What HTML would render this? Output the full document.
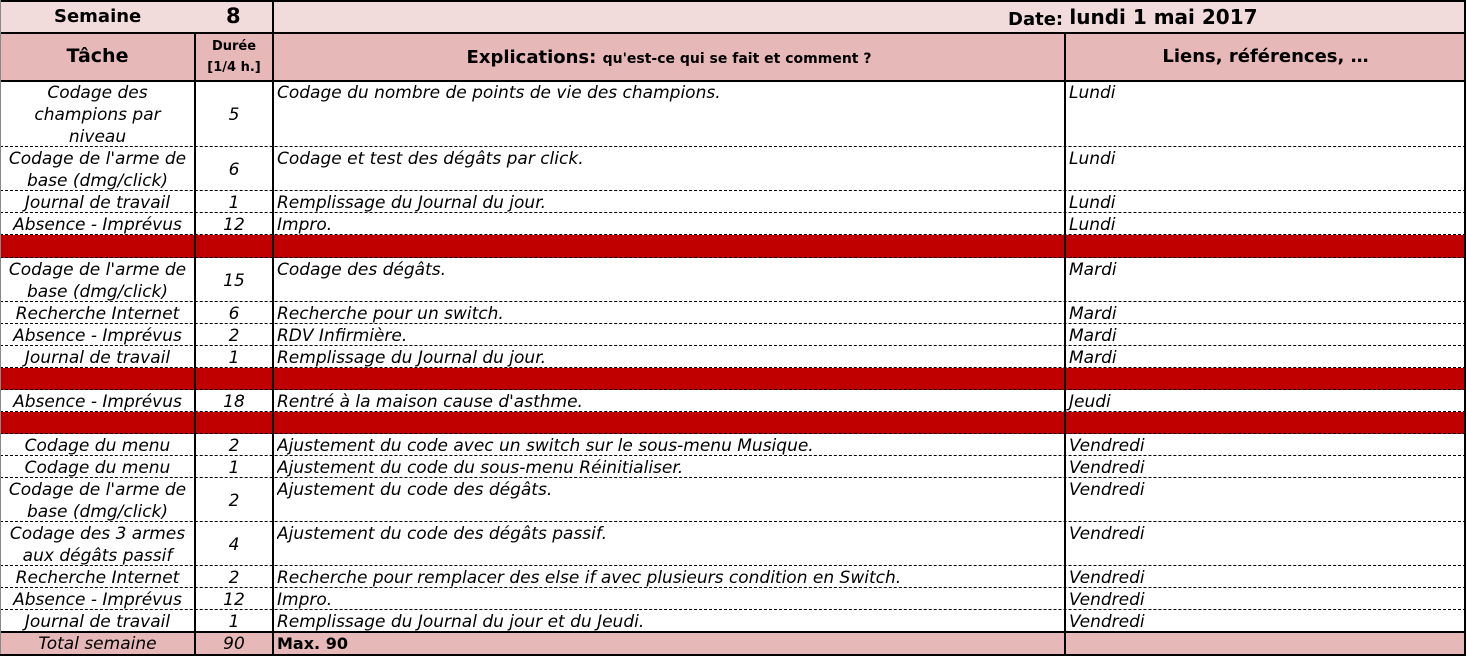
<!DOCTYPE html>
<html><head><meta charset="utf-8"><style>
*{margin:0;padding:0;box-sizing:border-box}
body{width:1468px;height:656px;background:#fff;position:relative;overflow:hidden;font-family:"DejaVu Sans","Liberation Sans",sans-serif;color:#000}
.r{position:absolute;left:0;width:1466px;border-bottom:1px dashed #000}
.c{position:absolute;top:0;height:100%;font-size:17px;font-style:italic;line-height:22px;letter-spacing:0px}
.t{left:0;width:195px;text-align:center;display:flex;align-items:center;justify-content:center;white-space:nowrap;padding-top:2px}
.d{left:195px;width:78px;text-align:center;display:flex;align-items:center;justify-content:center;padding-top:2px}
.e{left:277px;width:785px;white-space:nowrap;overflow:hidden;top:1px}
.l{left:1069px;width:390px;top:1px}
.red{background:#c00000}
.v{position:absolute;top:0;width:2px;background:#000;height:654px}
.h{position:absolute;left:0;width:1466px;height:2px;background:#000}
</style></head><body>
<div style="position:absolute;left:0;top:0;width:1466px;height:33px;background:#f2dcdb"></div>
<div style="position:absolute;left:0;top:33px;width:1466px;height:48px;background:#e6b8b7"></div>
<div style="position:absolute;left:0;top:632px;width:1466px;height:22px;background:#e6b8b7"></div>
<div style="position:absolute;left:54px;top:6px;font-weight:bold;font-size:18px">Semaine</div>
<div style="position:absolute;left:226px;top:4px;font-weight:bold;font-size:21px">8</div>
<div style="position:absolute;left:1008px;top:6px;font-weight:bold;font-size:18px">Date: <span style="font-size:20px;position:relative;top:-1px">lundi 1 mai 2017</span></div>
<div style="position:absolute;left:0;top:45px;width:195px;text-align:center;font-weight:bold;font-size:19px">Tâche</div>
<div style="position:absolute;left:195px;top:36px;width:78px;text-align:center;font-weight:bold;font-size:13px;line-height:21px">Durée<br>[1/4 h.]</div>
<div style="position:absolute;left:273px;top:47px;width:792px;text-align:center;font-weight:bold;font-size:18px">Explications: <span style="font-size:14px">qu'est-ce qui se fait et comment ?</span></div>
<div style="position:absolute;left:1065px;top:46px;width:401px;text-align:center;font-weight:bold;font-size:18px">Liens, références, …</div>

<div class="r" style="top:81px;height:66px"><div class="c t">Codage des<br>champions par<br>niveau</div><div class="c d">5</div><div class="c e">Codage du nombre de points de vie des champions.</div><div class="c l">Lundi</div></div>
<div class="r" style="top:147px;height:44px"><div class="c t">Codage de l'arme de<br>base (dmg/click)</div><div class="c d">6</div><div class="c e">Codage et test des dégâts par click.</div><div class="c l">Lundi</div></div>
<div class="r" style="top:191px;height:22px"><div class="c t">Journal de travail</div><div class="c d">1</div><div class="c e">Remplissage du Journal du jour.</div><div class="c l">Lundi</div></div>
<div class="r" style="top:213px;height:22px"><div class="c t">Absence - Imprévus</div><div class="c d">12</div><div class="c e">Impro.</div><div class="c l">Lundi</div></div>
<div class="r red" style="top:235px;height:23px"></div>
<div class="r" style="top:258px;height:44px"><div class="c t">Codage de l'arme de<br>base (dmg/click)</div><div class="c d">15</div><div class="c e">Codage des dégâts.</div><div class="c l">Mardi</div></div>
<div class="r" style="top:302px;height:22px"><div class="c t">Recherche Internet</div><div class="c d">6</div><div class="c e">Recherche pour un switch.</div><div class="c l">Mardi</div></div>
<div class="r" style="top:324px;height:22px"><div class="c t">Absence - Imprévus</div><div class="c d">2</div><div class="c e">RDV Infirmière.</div><div class="c l">Mardi</div></div>
<div class="r" style="top:346px;height:22px"><div class="c t">Journal de travail</div><div class="c d">1</div><div class="c e">Remplissage du Journal du jour.</div><div class="c l">Mardi</div></div>
<div class="r red" style="top:368px;height:22px"></div>
<div class="r" style="top:390px;height:22px"><div class="c t">Absence - Imprévus</div><div class="c d">18</div><div class="c e">Rentré à la maison cause d'asthme.</div><div class="c l">Jeudi</div></div>
<div class="r red" style="top:412px;height:22px"></div>
<div class="r" style="top:434px;height:22px"><div class="c t">Codage du menu</div><div class="c d">2</div><div class="c e">Ajustement du code avec un switch sur le sous-menu Musique.</div><div class="c l">Vendredi</div></div>
<div class="r" style="top:456px;height:22px"><div class="c t">Codage du menu</div><div class="c d">1</div><div class="c e">Ajustement du code du sous-menu Réinitialiser.</div><div class="c l">Vendredi</div></div>
<div class="r" style="top:478px;height:44px"><div class="c t">Codage de l'arme de<br>base (dmg/click)</div><div class="c d">2</div><div class="c e">Ajustement du code des dégâts.</div><div class="c l">Vendredi</div></div>
<div class="r" style="top:522px;height:44px"><div class="c t">Codage des 3 armes<br>aux dégâts passif</div><div class="c d">4</div><div class="c e">Ajustement du code des dégâts passif.</div><div class="c l">Vendredi</div></div>
<div class="r" style="top:566px;height:22px"><div class="c t">Recherche Internet</div><div class="c d">2</div><div class="c e">Recherche pour remplacer des else if avec plusieurs condition en Switch.</div><div class="c l">Vendredi</div></div>
<div class="r" style="top:588px;height:22px"><div class="c t">Absence - Imprévus</div><div class="c d">12</div><div class="c e">Impro.</div><div class="c l">Vendredi</div></div>
<div class="r" style="top:610px;height:22px"><div class="c t">Journal de travail</div><div class="c d">1</div><div class="c e">Remplissage du Journal du jour et du Jeudi.</div><div class="c l">Vendredi</div></div>
<div class="r" style="top:632px;height:22px;border:none"><div class="c t">Total semaine</div><div class="c d">90</div><div class="c e" style="font-style:normal;font-weight:bold;font-size:16px">Max. 90</div></div>

<div class="h" style="top:0"></div>
<div class="h" style="top:32px"></div>
<div class="h" style="top:80px"></div>
<div class="h" style="top:631px"></div>
<div class="h" style="top:654px"></div>
<div class="v" style="left:0;background:#888;width:1px"></div>
<div class="v" style="left:194px;top:33px;height:621px"></div>
<div class="v" style="left:272px"></div>
<div class="v" style="left:1064px;top:33px;height:621px"></div>
<div class="v" style="left:1464px"></div>
</body></html>
